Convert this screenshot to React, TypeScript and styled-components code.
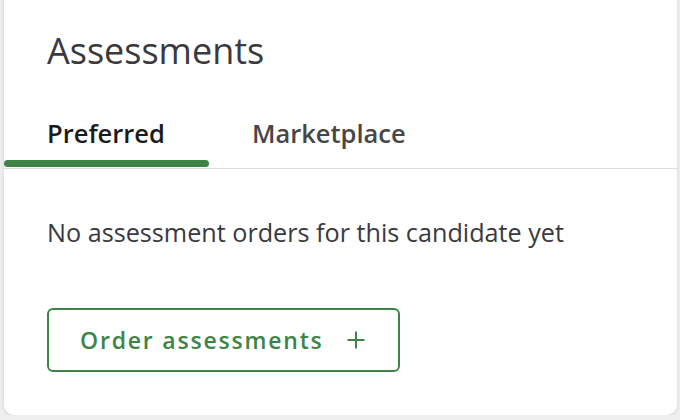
import styled, { createGlobalStyle } from 'styled-components';
import { useState } from 'react';

const GlobalStyle = createGlobalStyle`
  html, body {
    margin: 0;
    padding: 0;
    background: #efefef;
    font-family: "Open Sans", "Noto Sans", sans-serif;
  }
`;

const tabs = ['Preferred', 'Marketplace'];

const App = () => {
  const [active, setActive] = useState(0);

  return (
    <>
      <GlobalStyle />
      <StCard>
        <Title>Assessments</Title>
        <TabBar>
          {tabs.map((tab, i) => (
            <Tab key={tab} $active={i === active} onClick={() => setActive(i)}>
              {tab}
            </Tab>
          ))}
        </TabBar>
        <Body>
          <EmptyText>No assessment orders for this candidate yet</EmptyText>
          <OrderButton>
            Order assessments
            <svg width="18" height="18" viewBox="0 0 18 18" aria-hidden="true">
              <path d="M9 0.5v17M0.5 9h17" stroke="currentColor" strokeWidth="2" fill="none" />
            </svg>
          </OrderButton>
        </Body>
      </StCard>
    </>
  );
};

export default App;

const StCard = styled.section`
  box-sizing: border-box;
  margin: -10px 3px 0 4px;
  height: 425px;
  background: #fff;
  border-radius: 10px;
  box-shadow: 0 1px 4px rgba(0, 0, 0, 0.12);
  display: flex;
  flex-direction: column;
`;

const Title = styled.h1`
  margin: 0;
  padding: 37px 43px 0;
  font-size: 36px;
  line-height: 48px;
  font-weight: 400;
  color: #3b3940;
`;

const TabBar = styled.nav`
  display: flex;
  margin-top: 42px;
  border-bottom: 1px solid #dedede;
`;

const Tab = styled.button<{ $active: boolean }>`
  position: relative;
  border: none;
  background: none;
  padding: 0 44px 19px 43px;
  font-family: inherit;
  font-size: 25.5px;
  line-height: 32px;
  font-weight: 600;
  color: ${({ $active }) => ($active ? '#1b1b1b' : '#464646')};
  cursor: pointer;

  &::after {
    content: '';
    display: ${({ $active }) => ($active ? 'block' : 'none')};
    position: absolute;
    left: 0;
    right: 0;
    bottom: 1px;
    height: 7px;
    border-radius: 4px;
    background: #3e8447;
  }
`;

const Body = styled.div`
  display: flex;
  flex-direction: column;
  align-items: flex-start;
  padding: 47px 43px 0;
  gap: 60px;
`;

const EmptyText = styled.p`
  margin: 0;
  font-size: 25.2px;
  line-height: 32px;
  color: #3b3940;
`;

const OrderButton = styled.button`
  display: flex;
  align-items: center;
  gap: 23px;
  box-sizing: border-box;
  width: 353px;
  height: 64px;
  padding: 0 31px;
  border: 2px solid #3e8447;
  border-radius: 6px;
  background: #fff;
  font-family: inherit;
  font-size: 23px;
  font-weight: 600;
  letter-spacing: 1.8px;
  color: #3e8447;
  cursor: pointer;

  svg {
    flex: none;
  }
`;
